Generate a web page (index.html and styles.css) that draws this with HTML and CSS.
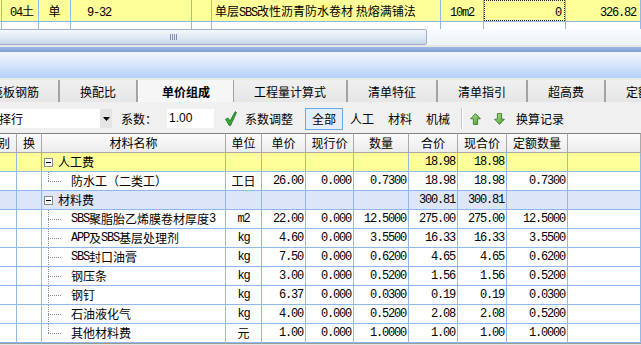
FILE: index.html
```html
<!DOCTYPE html>
<html lang="zh-CN">
<head>
  <meta charset="UTF-8">
  <title>单价组成</title>
  <link rel="stylesheet" href="styles.css">
</head>
<body>
  <div class="top-grid">
    <div class="tc y"></div>
    <div class="tc y pl8"><span class="en">04</span>土</div>
    <div class="tc y c">单</div>
    <div class="tc y pl16"><span class="en">9-32</span></div>
    <div class="tc y"></div>
    <div class="tc y pl3 clip">单层<span class="en">SBS</span>改性沥青防水卷材 热熔满铺法</div>
    <div class="tc y c"><span class="en">10m2</span></div>
    <div class="tc y"><div class="focus"><span class="en">0</span></div></div>
    <div class="tc y r"><span class="en">326.82</span></div>
    <div class="tc s"></div><div class="tc s"></div><div class="tc s"></div><div class="tc s"></div><div class="tc s"></div>
    <div class="tc s"></div><div class="tc s"></div><div class="tc s"></div><div class="tc s"></div>
  </div>

  <div class="hbar">
    <div class="thumb"><span class="grip"></span></div>
    <div class="track"></div>
  </div>

  <div class="gap"></div>
  <div class="band"></div>
  <div class="panel"></div>

  <div class="tabs">
    <div class="tab first">筏板钢筋</div>
    <div class="tab">换配比</div>
    <div class="tab active">单价组成</div>
    <div class="tab">工程量计算式</div>
    <div class="tab">清单特征</div>
    <div class="tab">清单指引</div>
    <div class="tab">超高费</div>
    <div class="tab">定额说明</div>
  </div>

  <div class="toolbar">
    <div class="combo">
      <span class="combo-text">择行</span>
      <span class="combo-btn"><svg width="7" height="4" viewBox="0 0 7 4"><path d="M0 0h7L3.5 4z" fill="#000"/></svg></span>
    </div>
    <span class="lbl">系数：</span>
    <span class="field">1.00</span>
    <svg class="check" width="12" height="15" viewBox="0 0 12 15">
      <path d="M0.6 8.4 L3 7 L5 10 L10.2 0.6 L11.5 1.6 L5.6 14.4 L4.2 14.4 Z" fill="#37a837" stroke="#1c6e1c" stroke-width="0.8" stroke-linejoin="round"/>
    </svg>
    <span class="lbl adj">系数调整</span>
    <span class="tb-btn on">全部</span>
    <span class="tb-btn">人工</span>
    <span class="tb-btn">材料</span>
    <span class="tb-btn">机械</span>
    <span class="sep"></span>
    <svg class="arrow up" width="11" height="12" viewBox="0 0 11 12">
      <defs><linearGradient id="ga" x1="0" y1="0" x2="1" y2="1"><stop offset="0" stop-color="#b4e69a"/><stop offset="1" stop-color="#3f9a2e"/></linearGradient></defs>
      <path d="M5.5 0.6 L10.4 5.8 L7.6 5.8 L7.6 11.4 L3.4 11.4 L3.4 5.8 L0.6 5.8 Z" fill="url(#ga)" stroke="#3a7a2a" stroke-width="0.9" stroke-linejoin="round"/>
    </svg>
    <svg class="arrow down" width="11" height="12" viewBox="0 0 11 12">
      <defs><linearGradient id="gb" x1="0" y1="0" x2="1" y2="1"><stop offset="0" stop-color="#b4e69a"/><stop offset="1" stop-color="#3f9a2e"/></linearGradient></defs>
      <path d="M5.5 11.4 L10.4 6.2 L7.6 6.2 L7.6 0.6 L3.4 0.6 L3.4 6.2 L0.6 6.2 Z" fill="url(#gb)" stroke="#3a7a2a" stroke-width="0.9" stroke-linejoin="round"/>
    </svg>
    <span class="lbl rec">换算记录</span>
  </div>

  <div class="grid">
    <div class="hd cut">别</div>
    <div class="hd">换</div>
    <div class="hd">材料名称</div>
    <div class="hd">单位</div>
    <div class="hd">单价</div>
    <div class="hd">现行价</div>
    <div class="hd">数量</div>
    <div class="hd">合价</div>
    <div class="hd">现合价</div>
    <div class="hd">定额数量</div>
    <div class="hd"></div>

    <div class="row y">
      <div></div><div></div>
      <div class="name"><i class="box"></i>人工费</div>
      <div></div><div></div><div></div><div></div>
      <div class="n">18.98</div><div class="n">18.98</div><div></div><div></div>
    </div>
    <div class="row">
      <div></div><div></div>
      <div class="name"><i class="br last"></i>防水工（二类工）</div>
      <div class="u">工日</div>
      <div class="n">26.00</div><div class="n">0.000</div><div class="n">0.7300</div>
      <div class="n">18.98</div><div class="n">18.98</div><div class="n">0.7300</div><div></div>
    </div>
    <div class="row b">
      <div></div><div></div>
      <div class="name"><i class="box"></i>材料费</div>
      <div></div><div></div><div></div><div></div>
      <div class="n">300.81</div><div class="n">300.81</div><div></div><div></div>
    </div>
    <div class="row">
      <div></div><div></div>
      <div class="name"><i class="br"></i><span class="en">SBS</span>聚脂胎乙烯膜卷材厚度<span class="en">3</span></div>
      <div class="u en">m2</div>
      <div class="n">22.00</div><div class="n">0.000</div><div class="n">12.5000</div>
      <div class="n">275.00</div><div class="n">275.00</div><div class="n">12.5000</div><div></div>
    </div>
    <div class="row">
      <div></div><div></div>
      <div class="name"><i class="br"></i><span class="en">APP</span>及<span class="en">SBS</span>基层处理剂</div>
      <div class="u en">kg</div>
      <div class="n">4.60</div><div class="n">0.000</div><div class="n">3.5500</div>
      <div class="n">16.33</div><div class="n">16.33</div><div class="n">3.5500</div><div></div>
    </div>
    <div class="row">
      <div></div><div></div>
      <div class="name"><i class="br"></i><span class="en">SBS</span>封口油膏</div>
      <div class="u en">kg</div>
      <div class="n">7.50</div><div class="n">0.000</div><div class="n">0.6200</div>
      <div class="n">4.65</div><div class="n">4.65</div><div class="n">0.6200</div><div></div>
    </div>
    <div class="row">
      <div></div><div></div>
      <div class="name"><i class="br"></i>钢压条</div>
      <div class="u en">kg</div>
      <div class="n">3.00</div><div class="n">0.000</div><div class="n">0.5200</div>
      <div class="n">1.56</div><div class="n">1.56</div><div class="n">0.5200</div><div></div>
    </div>
    <div class="row">
      <div></div><div></div>
      <div class="name"><i class="br"></i>钢钉</div>
      <div class="u en">kg</div>
      <div class="n">6.37</div><div class="n">0.000</div><div class="n">0.0300</div>
      <div class="n">0.19</div><div class="n">0.19</div><div class="n">0.0300</div><div></div>
    </div>
    <div class="row">
      <div></div><div></div>
      <div class="name"><i class="br"></i>石油液化气</div>
      <div class="u en">kg</div>
      <div class="n">4.00</div><div class="n">0.000</div><div class="n">0.5200</div>
      <div class="n">2.08</div><div class="n">2.08</div><div class="n">0.5200</div><div></div>
    </div>
    <div class="row">
      <div></div><div></div>
      <div class="name"><i class="br last"></i>其他材料费</div>
      <div class="u">元</div>
      <div class="n">1.00</div><div class="n">0.000</div><div class="n">1.0000</div>
      <div class="n">1.00</div><div class="n">1.00</div><div class="n">1.0000</div><div></div>
    </div>
  </div>
  <div class="foot"></div>
</body>
</html>
```

FILE: styles.css
```css
:root {
  --grid-line: #8fb9ea;
  --yellow: #ffff99;
  --blue-row: #dce6f8;
}
* { box-sizing: border-box; }
body {
  margin: 0;
  width: 641px; height: 345px;
  overflow: hidden;
  font-family: "Noto Sans CJK SC", sans-serif;
  font-size: 12px;
  color: #000;
  background: #fff;
}
.en {
  font-family: "Liberation Mono", monospace;
  font-size: 12px;
  letter-spacing: -1.2px;
}

/* upper grid (clipped quota row) */
.top-grid {
  display: grid;
  grid-template-columns: 2px 37px 32px 121px 20px 229px 43px 82px 1fr;
  grid-template-rows: 22px 7px;
}
.tc {
  border-right: 1px solid var(--grid-line);
  border-bottom: 1px solid var(--grid-line);
  line-height: 21px;
  white-space: nowrap;
}
.tc.clip { overflow: hidden; }
.tc.y { background: var(--yellow); }
.tc.s { border-bottom: none; }
.tc.c { text-align: center; }
.tc.r { text-align: right; padding-right: 4px; }
.pl3 { padding-left: 3px; }
.pl8 { padding-left: 8px; }
.pl16 { padding-left: 16px; }
.focus {
  height: 21px;
  border: 1px dotted #222;
  text-align: right; padding-right: 3px;
  line-height: 19px;
}

/* horizontal scrollbar */
.hbar { display: flex; height: 16px; overflow: hidden; }
.thumb {
  flex: 0 0 508px; margin-left: -81px;
  display: flex; justify-content: center; align-items: center;
  background: linear-gradient(#f4f7fc, #dde6f3 60%, #c9d6ea);
  border: 1px solid #9eb0cc; border-radius: 2px;
}
.grip {
  width: 7px; height: 6px;
  background: repeating-linear-gradient(to right, #7f90ae 0 1px, transparent 1px 2px);
}
.track { flex: 1; background: linear-gradient(#f9fbfe, #eef3fa); }

.gap { height: 2px; background: #e6e6e6; }
.band { height: 5px; background: linear-gradient(#9db9e6, #7f9fd6); }
.panel { height: 26px; background: linear-gradient(#f2f6fd, #d7e6fb 50%, #b2d0f8); }

/* tab strip */
.tabs {
  display: flex; height: 24px; padding-top: 2px;
  background: #e9e9e9;
  overflow: hidden; white-space: nowrap;
}
.tab {
  flex: 0 0 auto;
  padding: 1px 20px 0;
  line-height: 21px;
  border-right: 2px solid #a3a3a3;
  background: linear-gradient(#f0f0f0, #e6e6e6);
}
.tab.first { margin-left: -29px; padding-right: 19px; }
.tab.active {
  padding: 1px 23px 0;
  font-weight: bold;
  background: #f6f6f6;
  border-left: 1px solid #fff;
  border-right-width: 1px;
}

/* toolbar */
.toolbar {
  display: flex; align-items: center;
  height: 31px; padding-top: 2px;
  background: #f0f0f0;
  white-space: nowrap;
}
.combo { display: flex; width: 112px; height: 19px; }
.combo-text { flex: 1; background: #fff; line-height: 19px; text-indent: -1px; }
.combo-btn {
  width: 12px; background: #e4e4e4;
  display: flex; align-items: center; justify-content: center;
}
.lbl { margin-left: 9px; }
.field {
  width: 47px; height: 19px; margin-left: 10px;
  background: #fff; padding-left: 2px;
  font-family: "Liberation Sans", sans-serif; line-height: 19px;
}
.check { margin-left: 11px; }
.lbl.adj { margin-left: 8px; margin-right: 12px; }
.tb-btn {
  padding: 0 6px; line-height: 20px;
  border: 1px solid transparent;
}
.tb-btn.on { background: #e2eefb; border-color: #6aa8e6; }
.sep {
  width: 2px; height: 21px; margin: 0 7px 0 4px;
  border-left: 1px solid #c4c4c4; border-right: 1px solid #fff;
}
.arrow.down { margin-left: 13px; }
.lbl.rec { margin-left: 11px; }

/* material grid */
.grid {
  display: grid;
  grid-template-columns: 17px 25px 184px 36px 44px 48px 55px 49px 49px 61px 1fr;
}
.row { display: contents; }
.grid > div, .row > div {
  height: 19px;
  border-right: 1px solid var(--grid-line);
  border-bottom: 1px solid var(--grid-line);
  line-height: 18px;
  white-space: nowrap;
}
.grid > .hd {
  height: 20px;
  text-align: center;
  background: linear-gradient(#fbfbfb, #ececec);
  border-top: 1px solid #808080;
  border-right-color: #a9a9a9;
  border-bottom-color: #a9a9a9;
}
.grid > .hd.cut { text-align: left; text-indent: -2px; overflow: hidden; }
.row.y > div { background: var(--yellow); }
.row.b > div { background: var(--blue-row); }
.row > .name { display: flex; align-items: center; overflow: hidden; }
.row > .u { text-align: center; }
.row > .n {
  text-align: right; padding-right: 2px;
  font-family: "Liberation Mono", monospace;
  font-size: 12px; letter-spacing: -1.2px;
}
.box {
  flex: 0 0 9px; height: 9px;
  margin: 0 5px 0 2px;
  border: 1px solid #8a8a8a;
  background: #fff linear-gradient(#000, #000) center / 5px 1px no-repeat;
}
.br {
  flex: 0 0 14px; align-self: stretch;
  margin: 0 9px 0 6px;
  background-image:
    repeating-linear-gradient(to bottom, #8c8c8c 0 1px, transparent 1px 2px),
    repeating-linear-gradient(to right, #8c8c8c 0 1px, transparent 1px 2px);
  background-size: 1px 100%, 100% 1px;
  background-position: 0 0, 0 9px;
  background-repeat: no-repeat;
}
.br.last { background-size: 1px 10px, 100% 1px; }

.foot { height: 10px; border-top: 1px solid #9a9a9a; background: #e4e4e4; }
```
